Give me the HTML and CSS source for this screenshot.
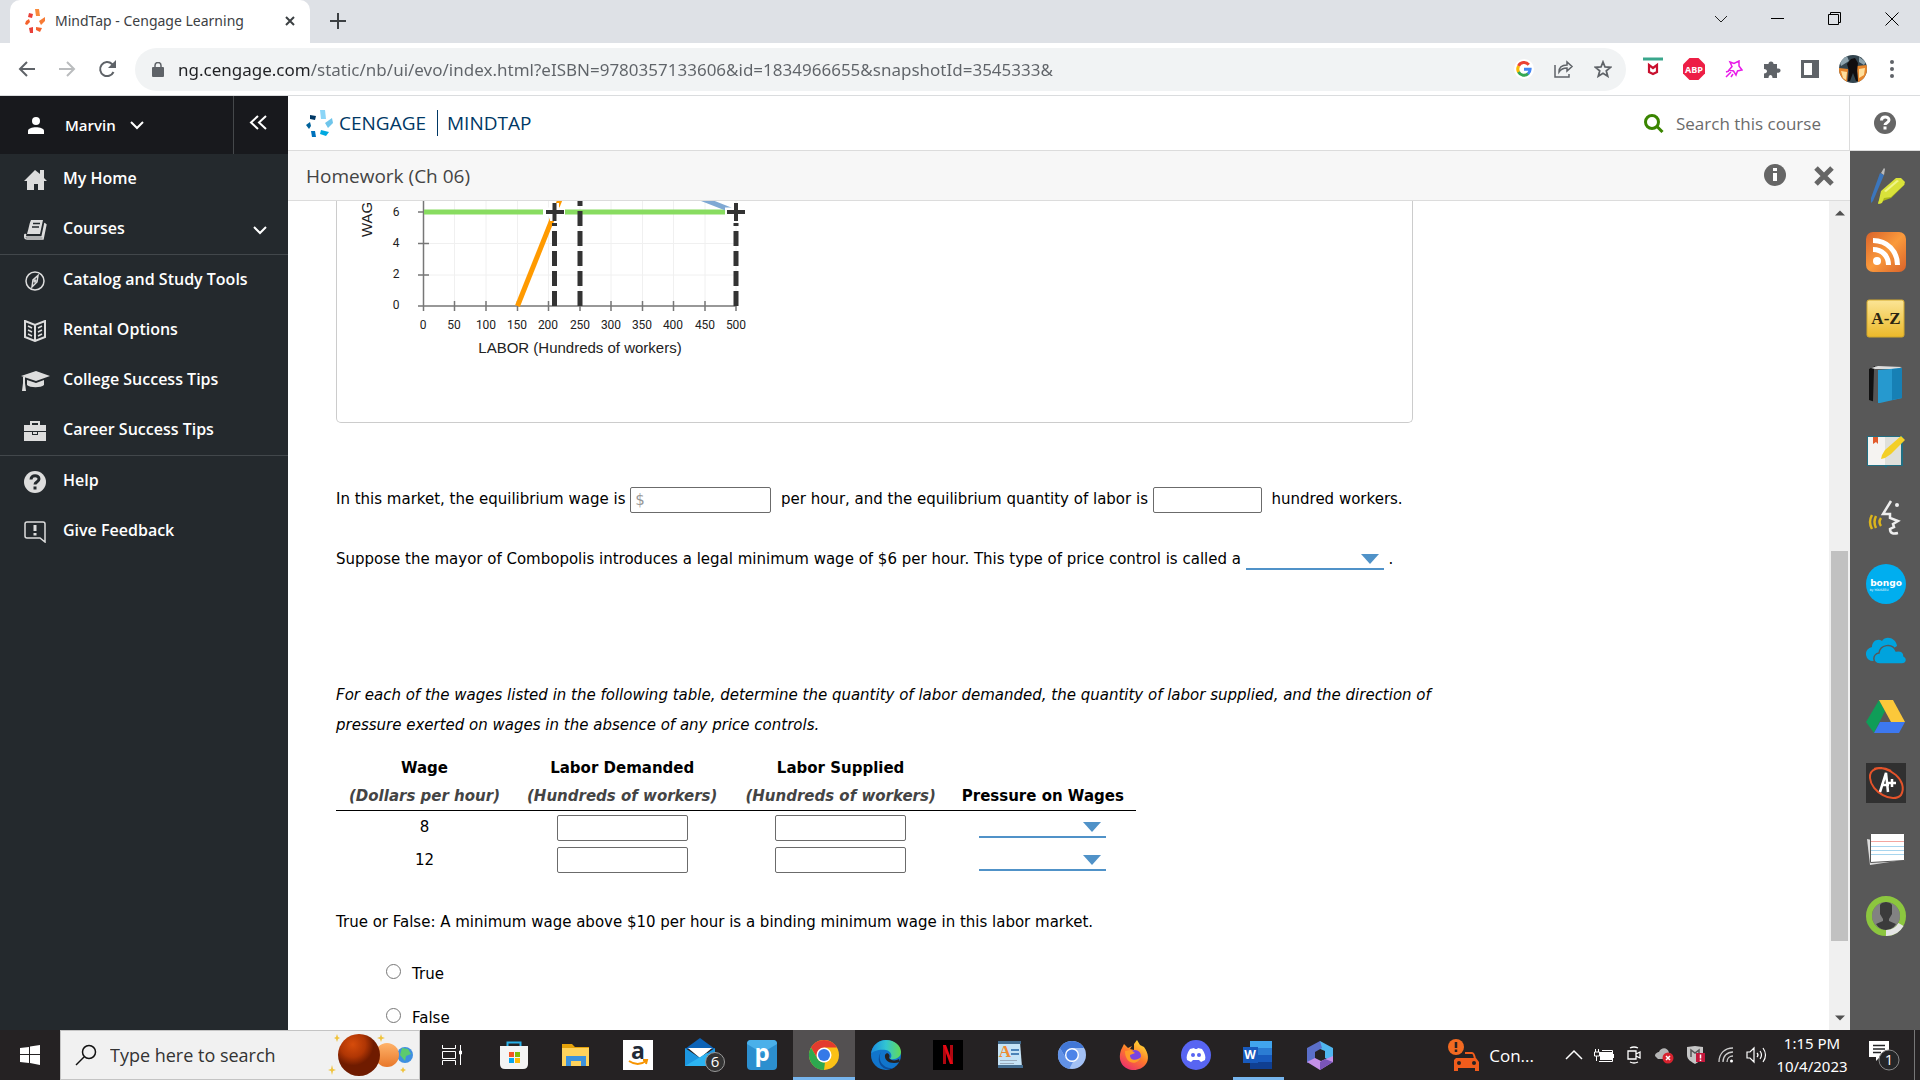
FILE: index.html
```html
<!DOCTYPE html>
<html lang="en">
<head>
<meta charset="utf-8">
<title>MindTap - Cengage Learning</title>
<link rel="stylesheet" href="styles.css">
</head>
<body>
<div class="tabstrip">
  <div class="tab">
    <svg width="20" height="24" viewBox="0 0 20 24"><g fill="#f4622c"><path fill="#f98b3c" d="M10 0h4l1 7h-4z"/><path fill="#e9403a" d="M4 4l4 1-1 4-4-1z"/><path d="M1 12l3-2 1 3-3 3-2-1z"/><path fill="#e9403a" d="M4 19l4-1v6H5z"/><path d="M11 18l6 1-2 4-4-2z"/><path fill="#f77b35" d="M14 12l6-4v4l-4 4z"/></g></svg>
    <span class="tab-title">MindTap - Cengage Learning</span>
    <button class="plain" aria-label="Close tab"><svg width="10" height="10" viewBox="0 0 10 10" fill="none" stroke="#3c4043" stroke-width="2"><path d="M1 1l8 8M9 1L1 9"/></svg></button>
  </div>
  <button class="plain newtab" aria-label="New tab"><svg width="16" height="16" viewBox="0 0 16 16" stroke="#3c4043" stroke-width="2"><path d="M8 0v16M0 8h16"/></svg></button>
  <div class="window-controls">
    <button class="plain" aria-label="Search tabs"><svg width="14" height="14" viewBox="0 0 14 14" fill="none" stroke="#222"><path d="M1 4l6 6 6-6"/></svg></button>
    <button class="plain" aria-label="Minimize"><svg width="13" height="13" viewBox="0 0 13 13" stroke="#000"><path d="M0 6.500h13"/></svg></button>
    <button class="plain" aria-label="Restore"><svg width="13" height="13" viewBox="0 0 13 13" fill="none" stroke="#000"><path d="M.5 2.500h10v10H.5zM2.500 2.500v-2h10v10h-2"/></svg></button>
    <button class="plain" aria-label="Close"><svg width="14" height="14" viewBox="0 0 14 14" stroke="#000"><path d="M.5.5l13 13M13.500.5l-13 13"/></svg></button>
  </div>
</div>

<div class="toolbar">
  <div class="history">
    <button class="plain" aria-label="Back"><svg width="18" height="16" viewBox="0 0 18 16" fill="none" stroke="#5f6368" stroke-width="2"><path d="M17 8H2M9 1L2 8l7 7"/></svg></button>
    <button class="plain" aria-label="Forward"><svg width="18" height="16" viewBox="0 0 18 16" fill="none" stroke="#babcbe" stroke-width="2"><path d="M1 8h15M9 1l7 7-7 7"/></svg></button>
    <button class="plain" aria-label="Reload"><svg width="18" height="18" viewBox="0 0 18 18" fill="none" stroke="#5f6368" stroke-width="2"><path d="M15.500 12A7 7 0 1 1 14 4l2 2"/><path fill="#5f6368" stroke="none" d="M18 0v8h-8z"/></svg></button>
  </div>
  <div class="omnibox">
    <svg width="12" height="15" viewBox="0 0 12 15"><path fill="#5f6368" d="M1 5h10a1 1 0 0 1 1 1v8a1 1 0 0 1-1 1H1a1 1 0 0 1-1-1V6a1 1 0 0 1 1-1z"/><path fill="none" stroke="#5f6368" stroke-width="1.500" d="M3 6V3.500a3 3 0 0 1 6 0V6"/></svg>
    <input class="url" type="text" aria-label="Address" value="ng.cengage.com/static/nb/ui/evo/index.html?eISBN=9780357133606&amp;id=1834966655&amp;snapshotId=3545333&amp;">
    <button class="plain" aria-label="Google"><svg width="20" height="20" viewBox="0 0 20 20" fill="none" stroke-width="3"><circle cx="10" cy="10" r="10" fill="#fff"/><path stroke="#ea4335" d="M14.800 5.700A6.200 6.200 0 0 0 4.500 7"/><path stroke="#fbbc05" d="M4.600 7a6.200 6.200 0 0 0 0 6.200"/><path stroke="#34a853" d="M4.500 13a6.200 6.200 0 0 0 9.700 1.600"/><path stroke="#4285f4" d="M14 14.800a6.200 6.200 0 0 0 2.100-4.500H10"/></svg></button>
    <button class="plain" aria-label="Share"><svg width="20" height="18" viewBox="0 0 20 18" fill="none" stroke="#5f6368" stroke-width="1.500"><path d="M1 5v12h14v-3M5 12c0-5 3-7 8-7V2l5 4.500-5 4.500V8c-4 0-6 1-8 4z"/></svg></button>
    <button class="plain" aria-label="Bookmark"><svg width="18" height="18" viewBox="0 0 18 18" fill="none" stroke="#5f6368" stroke-width="1.800"><path d="M9 2l2 5 5.500.4-4.200 3.500 1.400 5.300L9 13.300l-4.700 2.900 1.400-5.300L1.500 7.400 7 7z"/></svg></button>
  </div>
  <div class="extensions">
    <button class="plain" aria-label="McAfee"><svg width="20" height="28" viewBox="0 0 20 28"><path stroke="#3aa78c" stroke-width="3" d="M0 4h20"/><path fill="none" stroke="#c8102e" stroke-width="2.200" d="M6 17V10l4 3 4-3v7l-4 2z"/></svg></button>
    <button class="plain" aria-label="Adblock Plus"><svg width="22" height="22" viewBox="0 0 22 22"><path fill="#ed1e45" d="M6.500 0h9L22 6.500v9L15.500 22h-9L0 15.500v-9z"/><text x="11" y="15" text-anchor="middle" class="abp">ABP</text></svg></button>
    <button class="plain" aria-label="Wand"><svg width="18" height="18" viewBox="0 0 18 18" fill="none" stroke="#e81be8" stroke-width="1.500"><path d="M5 2l4 1.500L14 1v5l3 4-4.500 1L11 15l-2.500-4L4 10l3-3.500zM1 17l5-5M1 12l3-1M6 17l2-3"/></svg></button>
    <button class="plain" aria-label="Extensions"><svg width="18" height="18" viewBox="0 0 18 18" fill="#5f6368"><path d="M1 4h4.500a2.500 2.500 0 1 1 5 0H14v4.500h1.500a2 2 0 1 1 0 4.200H14V18H9.500c0-4-4-4-4 0H1v-4.500c4 0 4-4.500 0-4.500z"/></svg></button>
    <button class="plain" aria-label="Side panel"><svg width="18" height="18" viewBox="0 0 18 18"><path fill="#5f6368" fill-rule="evenodd" d="M0 0h18v18H0zM3 3v12h8V3z"/></svg></button>
    <button class="plain" aria-label="Profile"><svg width="28" height="28" viewBox="0 0 28 28"><defs><clipPath id="av"><circle cx="14" cy="14" r="14"/></clipPath></defs><g clip-path="url(#av)"><path fill="#33454f" d="M0 0h28v28H0z"/><path fill="#8ea3ad" d="M0 4l8-3 2 5-8 5zM20 2l7 5-2 3-5-3z"/><path fill="#e8862b" d="M0 13l9 1-1 14-8-6zM18 11l10-1v12l-9 6z"/><path fill="#ffdf9c" d="M2 16l6 1-1 8-3-2zM20 14l6-1-1 7-5 3z"/><path fill="#100d0f" d="M12 4l4-1 3 5-1 8 1 10h-2l-3-8-3 8H9l1-10-2-7z"/></g></svg></button>
    <button class="plain menu" aria-label="Menu"><svg width="4" height="18" viewBox="0 0 4 18" fill="#5f6368"><circle cx="2" cy="2" r="2"/><circle cx="2" cy="9" r="2"/><circle cx="2" cy="16" r="2"/></svg></button>
  </div>
</div>

<div class="app">
  <aside class="sidebar">
    <div class="user">
      <button class="user-menu">
        <svg width="16" height="17" viewBox="0 0 16 17" fill="#fff"><circle cx="8" cy="4" r="4"/><path d="M0 17v-3c0-5 16-5 16 0v3z"/></svg>
        <span>Marvin</span>
        <svg width="14" height="9" viewBox="0 0 14 9" fill="none" stroke="#fff" stroke-width="2"><path d="M1 1l6 6 6-6"/></svg>
      </button>
      <button class="collapse" aria-label="Collapse"><svg width="18" height="15" viewBox="0 0 18 15" fill="none" stroke="#fff" stroke-width="2"><path d="M9 1L2 7.500 9 14M17 1l-7 6.500 7 6.500"/></svg></button>
    </div>
    <nav class="nav">
      <a href="#"><svg width="30" height="22" viewBox="0 0 30 22"><path fill="#ddd" d="M15 1l5 4V1h4v8l3 3h-3v9h-6v-6h-4v6H7v-9H4z"/></svg><span>My Home</span></a>
      <a href="#"><svg width="30" height="22" viewBox="0 0 30 22"><path fill="#ddd" d="M11 1h12l-3 14H7c2-6 2-10 4-14z"/><path stroke="#24292d" stroke-width="1.500" d="M13 4.500h7M12 8h7"/><path fill="none" stroke="#ddd" stroke-width="1.500" d="M25 4l-3 14H7c-2 0-2-2-1-3M5 15c-1 4 0 5 2 5h16l3-15"/></svg><span class="grow">Courses</span><svg width="14" height="9" viewBox="0 0 14 9" fill="none" stroke="#fff" stroke-width="2"><path d="M1 1l6 6 6-6"/></svg></a>
      <hr>
      <a href="#"><svg width="30" height="22" viewBox="0 0 30 22" fill="none" stroke="#ddd" stroke-width="1.500"><circle cx="15" cy="11" r="9"/><path d="M18 5.500l-1 6.500-5 5 1-7z"/><circle cx="15" cy="11" r="1"/></svg><span>Catalog and Study Tools</span></a>
      <a href="#"><svg width="30" height="22" viewBox="0 0 30 22" fill="none" stroke="#ddd" stroke-width="2"><path d="M5 1l10 4 10-4v16l-10 4-10-4zM15 5v16"/><path stroke-width="1.500" d="M8 6l4 2M8 10l4 2M8 14l4 2M22 6l-4 2M22 10l-4 2M22 14l-4 2"/></svg><span>Rental Options</span></a>
      <a href="#"><svg width="30" height="22" viewBox="0 0 30 22" fill="#ddd"><path d="M1 6l15-5 14 5-14 5zM7 10l9 3 8-3v5c-3 3-14 3-17 0zM3 7h2v6l1 8H2l1-8z"/></svg><span>College Success Tips</span></a>
      <a href="#"><svg width="30" height="22" viewBox="0 0 30 22" fill="#ddd"><path fill-rule="evenodd" d="M10 5V1h10v4h6v6H4V5zM12 3v2h6V3z"/><path d="M4 12h8v3h6v-3h8v9H4z"/><path d="M13 12h4v2h-4z"/></svg><span>Career Success Tips</span></a>
      <hr>
      <a href="#"><svg width="30" height="22" viewBox="0 0 30 22"><circle cx="15" cy="11" r="11" fill="#ddd"/><path fill="none" stroke="#24292d" stroke-width="3" d="M11 8.500c0-5 8-5 8-.5 0 3-4 3-4 5.500M15 15.500v3"/></svg><span>Help</span></a>
      <a href="#"><svg width="30" height="22" viewBox="0 0 30 22" fill="none" stroke="#ddd" stroke-width="1.500"><path d="M7 1h16q2 0 2 2v18l-5-4H7q-2 0-2-2V3q0-2 2-2z"/><path stroke-width="3" d="M15 4v6M15 12v2.500"/></svg><span>Give Feedback</span></a>
    </nav>
  </aside>

  <div class="course">
    <header class="brandbar">
      <a class="brand" href="#">
        <svg width="27" height="27" viewBox="0 0 27 27"><path fill="#8bd5f7" d="M14 0h5l1 9h-5z"/><path fill="#003865" d="M4 5l6 1-1 4-5-1z"/><path fill="#00629b" d="M0 15l4-3 1 4-2 3z"/><path fill="#0072bc" d="M5 21h4l1 6H6z"/><path fill="#00a9e0" d="M15 20l8 2-3 4-6-2z"/><path fill="#6fc5eb" d="M19 13l7-5 1 5-5 5z"/></svg>
        <span>CENGAGE</span><span class="brand-split">MINDTAP</span>
      </a>
      <label class="search"><svg width="20" height="19" viewBox="0 0 20 19" fill="none" stroke="#3a8500" stroke-width="3"><circle cx="8" cy="8" r="6.500"/><path d="M13 12.500l5.500 5.500"/></svg><input type="text" placeholder="Search this course" aria-label="Search this course"></label>
      <button class="help" aria-label="Help"><svg width="22" height="22" viewBox="0 0 22 22"><circle cx="11" cy="11" r="11" fill="#666"/><path fill="none" stroke="#fff" stroke-width="3" d="M7.500 8.500c0-4.500 7.500-4.500 7.500-.5 0 3-4 3-4 5M11 14.500v3"/></svg></button>
    </header>
    <div class="body">
      <div class="activity">
        <div class="titlebar">
          <h1>Homework (Ch 06)</h1>
          <button class="plain info" aria-label="Info"><svg width="22" height="22" viewBox="0 0 22 22"><circle cx="11" cy="11" r="11" fill="#666"/><path fill="#fff" d="M9 4h4v3H9zM9 9h4v8H9z"/></svg></button>
          <button class="plain" aria-label="Close activity"><svg width="20" height="20" viewBox="0 0 20 20" stroke="#666" stroke-width="5"><path d="M2 2l16 16M18 2L2 18"/></svg></button>
        </div>
        <div class="scroller">
          <main class="question">
            <div class="graph">
              <svg class="chart" width="460" height="170" viewBox="337 201 460 170">
                <g stroke="#f0f0f0" fill="none"><path d="M423 243.500h313M423 275h313M454.500 201v105M486 201v105M517.500 201v105M548.500 201v105M580 201v105M611 201v105M642.500 201v105M673.500 201v105M705 201v105M736 201v105"/></g>
                <g stroke="#777" stroke-width="1.500" fill="none"><path d="M423.500 201v110M418 306h318M418 212h11M418 243.500h11M418 275h11M454.500 301v10M486 301v10M517.500 301v10M548.500 301v10M580 301v10M611 301v10M642.500 301v10M673.500 301v10M705 301v10M736 301v10"/></g>
                <path stroke="#88dc60" stroke-width="5" d="M424 212h312"/>
                <path stroke="#ff9a00" stroke-width="5" d="M517.500 306L563 192"/>
                <path stroke="#7fa8d3" stroke-width="5" d="M690 194l46 18"/>
                <g stroke="#fff" stroke-width="9"><path d="M543 212h22M554.500 203v18"/><path d="M725 212h24M736 203v18"/></g>
                <g stroke="#333" stroke-width="5"><path stroke-dasharray="15 5" d="M554.500 306v-83M580 306V201M736 306v-83"/><path stroke-width="4" d="M546 212h18M554.500 203v18M727 212h18M736 203v18"/></g>
                <g class="tick" text-anchor="middle"><text x="396" y="216">6</text><text x="396" y="247">4</text><text x="396" y="278">2</text><text x="396" y="309">0</text><text x="423" y="329">0</text><text x="454" y="329">50</text><text x="486" y="329">100</text><text x="517" y="329">150</text><text x="548" y="329">200</text><text x="580" y="329">250</text><text x="611" y="329">300</text><text x="642" y="329">350</text><text x="673" y="329">400</text><text x="705" y="329">450</text><text x="736" y="329">500</text></g>
                <text class="axis" text-anchor="middle" x="580" y="353">LABOR (Hundreds of workers)</text>
                <text class="axis" transform="translate(372 237) rotate(-90)">WAGE</text>
              </svg>
            </div>
            <p class="blank-line">In this market, the equilibrium wage is <input class="wide" type="text" placeholder="$" aria-label="Equilibrium wage"> per hour, and the equilibrium quantity of labor is <input type="text" aria-label="Equilibrium quantity"> hundred workers.</p>
            <p class="blank-line">Suppose the mayor of Combopolis introduces a legal minimum wage of $6 per hour. This type of price control is called a <select class="pick" aria-label="Price control type"><option></option></select> .</p>
            <p class="prompt">For each of the wages listed in the following table, determine the quantity of labor demanded, the quantity of labor supplied, and the direction of pressure exerted on wages in the absence of any price controls.</p>
            <table>
              <thead><tr><th>Wage<br><em>(Dollars per hour)</em></th><th>Labor Demanded<br><em>(Hundreds of workers)</em></th><th>Labor Supplied<br><em>(Hundreds of workers)</em></th><th>Pressure on Wages</th></tr></thead>
              <tbody>
                <tr><td>8</td><td><input type="text" aria-label="Labor demanded at 8"></td><td><input type="text" aria-label="Labor supplied at 8"></td><td><select class="pick" aria-label="Pressure at 8"><option></option></select></td></tr>
                <tr><td>12</td><td><input type="text" aria-label="Labor demanded at 12"></td><td><input type="text" aria-label="Labor supplied at 12"></td><td><select class="pick" aria-label="Pressure at 12"><option></option></select></td></tr>
              </tbody>
            </table>
            <p class="statement">True or False: A minimum wage above $10 per hour is a binding minimum wage in this labor market.</p>
            <div class="choices">
              <label><input type="radio" name="tf"> <span>True</span></label>
              <label><input type="radio" name="tf"> <span>False</span></label>
            </div>
          </main>
          <div class="scrollbar">
            <svg width="10" height="6" viewBox="0 0 10 6"><path fill="#505050" d="M0 5.500L5 .5l5 5z"/></svg>
            <div class="track"><div class="thumb"></div></div>
            <svg width="10" height="6" viewBox="0 0 10 6"><path fill="#505050" d="M0 .5l5 5 5-5z"/></svg>
          </div>
        </div>
      </div>
      <div class="rail">
        <button class="plain" aria-label="Highlighter"><svg width="40" height="40" viewBox="0 0 40 40"><path fill="#3b76bd" d="M14 7l4 2L7 35l-2 2v-5z"/><path fill="#bbb" d="M18 2l1 1-1 6-3-2z"/><path fill="#aab61c" d="M14 38l-2-1 2-5 19-16 6 2-14 14-8 3z"/><path fill="#d9e23a" d="M13 34l2-9L30 12l5 0 4 4-1 3-13 12-7 1-2 5-4 1z"/><path fill="#f0f58a" d="M18 25l13-11 2 1-13 11z"/></svg></button>
        <button class="plain" aria-label="RSS"><svg width="40" height="40" viewBox="0 0 40 40"><defs><linearGradient id="rs" x2="1" y2="1"><stop stop-color="#d9622a"/><stop offset=".5" stop-color="#fa9a3c"/><stop offset="1" stop-color="#d9622a"/></linearGradient></defs><rect width="40" height="40" rx="7" fill="url(#rs)"/><circle cx="11" cy="29" r="4" fill="#fff"/><path fill="none" stroke="#fff" stroke-width="5" d="M7 17.500c9 0 15.500 6.500 15.500 15.500M7 8.500C21 8.500 31.500 19 31.500 33"/></svg></button>
        <button class="plain" aria-label="Glossary"><svg width="40" height="40" viewBox="0 0 40 40"><defs><linearGradient id="az" x2="0" y2="1"><stop stop-color="#fbe596"/><stop offset="1" stop-color="#ecb92a"/></linearGradient></defs><rect x="1" y="1" width="37" height="37" rx="2" fill="url(#az)" stroke="#d3a92d"/><text x="20" y="25" text-anchor="middle" class="az">A-Z</text></svg></button>
        <button class="plain" aria-label="Book"><svg width="40" height="40" viewBox="0 0 40 40"><path fill="#111" d="M3 4l6-3v36l-6-2z"/><path fill="#555" d="M8 4h4v34l-5-1z"/><path fill="#ddd" d="M5 3l7-2 24 1-5 2H9z"/><path fill="#2699cf" d="M12 5l24-2v30l-22 5h-2z"/><path fill="#1780b5" d="M26 4l10-1v30l-10 2z"/></svg></button>
        <button class="plain" aria-label="Notes"><svg width="40" height="40" viewBox="0 0 40 40"><path fill="#216f83" d="M1 5h36v30H21l-1 2-2-2H1z"/><path fill="#f5f3f1" d="M2 6h17v28H2z"/><path fill="#dfe0db" d="M19 6h16v28H19z"/><path fill="#e25b2c" d="M7 6h5v7l-2-2-3 2z"/><path fill="#f3cf27" d="M19 19L35 5l4 4-14 14-6 4-4 1 1-4z"/></svg></button>
        <button class="plain" aria-label="ReadSpeaker"><svg width="40" height="40" viewBox="0 0 40 40" fill="none" stroke-width="2.500"><path stroke="#eee" d="M25 3l-8 13h7v4l8 3-5 3 1 3-4 2c0 5 4 5 8 4"/><circle cx="31" cy="7" r="2" fill="#eee" stroke="none"/><g stroke="#dcb51c" stroke-width="2.500"><path d="M15 20q-3 4 0 8M10 18q-3 6 0 12M6 17q-4 7 0 14"/></g></svg></button>
        <button class="plain" aria-label="Bongo"><svg width="40" height="40" viewBox="0 0 40 40"><circle cx="20" cy="20" r="20" fill="#00aeef"/><text x="20" y="22" text-anchor="middle" class="bongo">bongo</text><text x="13" y="27" text-anchor="middle" class="bongo-sub">by YOUSEEU</text></svg></button>
        <button class="plain" aria-label="OneDrive"><svg width="40" height="40" viewBox="0 0 40 40"><path fill="#00a3dd" d="M8 30a7 7 0 0 1-2-14c0-6 6-9 10-6 4-6 14-3 15 5z"/><path fill="#00a3dd" stroke="#585858" stroke-width="1.500" d="M14 33c-8 0-8-10-1-11 1-8 13-11 17-2 6-1 8 2 8 5 4 2 3 8-2 8z"/></svg></button>
        <button class="plain" aria-label="Drive"><svg width="40" height="40" viewBox="0 0 40 40"><path fill="#0f9d58" d="M13 3l6 11L8 36 0 25z"/><path fill="#fbc83a" d="M13 3h14l12 22H25z"/><path fill="#3d78ef" d="M14 25h25l-6 11H8z"/></svg></button>
        <button class="plain" aria-label="Grades"><svg width="40" height="40" viewBox="0 0 40 40" fill="none"><path fill="#303030" d="M0 0h40v40H0z"/><path stroke="#e5532a" stroke-width="2" d="M8 6c14-5 35 12 27 26-8 9-30-3-31-17C3 6 14 2 25 8"/><path stroke="#fff" stroke-width="2.500" d="M14 29l6-19 2 19M15 22h8M26 16v8M22 20h8"/></svg></button>
        <button class="plain" aria-label="Flashcards"><svg width="40" height="40" viewBox="0 0 40 40"><path fill="#ddd" d="M1 9l5 1 31 20-33 5z"/><path fill="#fff" stroke="#555" d="M4.500 3.500h34v27l-34 2z"/><path stroke="#f3a6a0" d="M5 11.500h33"/><path stroke="#a7d5ee" d="M5 16.500h33M5 20.500h33M5 24.500h33"/></svg></button>
        <button class="plain" aria-label="Profile status"><svg width="40" height="40" viewBox="0 0 40 40"><circle cx="20" cy="20" r="14" fill="#828282"/><path fill="#3b3b3b" d="M14 9c2-4 10-4 12 0v9l-3 5v2l7 3c-5 8-15 8-20 0l7-3v-2l-3-5z"/><circle cx="20" cy="20" r="17" fill="none" stroke="#8cc63f" stroke-width="6"/><path fill="none" stroke="#e5e5e5" stroke-width="6" d="M35 28.500A17 17 0 0 1 20 37"/></svg></button>
      </div>
    </div>
  </div>
</div>

<div class="taskbar">
  <button class="start" aria-label="Start"><svg width="20" height="20" viewBox="0 0 20 20" fill="#fff"><path d="M0 3l9-1v7H0zM10 1.500L20 0v9H10zM0 10h9v8l-9-1zM10 10h10v10l-10-2z"/></svg></button>
  <div class="tasksearch">
    <svg width="22" height="22" viewBox="0 0 22 22" fill="none" stroke="#111" stroke-width="1.500"><circle cx="14" cy="8" r="6.500"/><path d="M9 13l-8 8"/></svg>
    <input type="text" placeholder="Type here to search" aria-label="Type here to search">
    <svg width="86" height="48" viewBox="0 0 86 48"><defs><radialGradient id="p1" cx=".35" cy=".25"><stop stop-color="#d64c0b"/><stop offset=".6" stop-color="#b03604"/><stop offset="1" stop-color="#6f1b00"/></radialGradient><linearGradient id="p2" x2="0" y2="1"><stop stop-color="#ffb36a"/><stop offset="1" stop-color="#e8772a"/></linearGradient></defs><g fill="#f0c33c"><path d="M9 3l1 3 2 1-2 1-1 3-1-3-2-1 2-1zM53 3l1 3 3 1-3 1-1 3-1-3-3-1 3-1zM4 34l1 4 3 1-3 1-1 4-1-4-3-1 3-1zM75 36l1 2 2 1-2 1-1 2-1-2-2-1 2-1z"/></g><circle cx="77" cy="24" r="8" fill="#3f8fe0"/><path fill="#5ccb6f" d="M74 17l6 1 3 5-5 2-1 5-5-6z"/><circle cx="59" cy="24" r="12" fill="url(#p2)"/><circle cx="31" cy="24" r="21" fill="url(#p1)"/></svg>
  </div>
  <div class="apps">
    <button aria-label="Task view"><svg width="22" height="20" viewBox="0 0 22 20" fill="none" stroke="#fff"><path d="M1.500 0v3.500h13V0M1.500 20v-4.500h13V20M1.500 6.500h13v7h-13zM19.500 0v20"/><path fill="#fff" d="M18.500 6h2v3h-2z"/></svg></button>
    <button aria-label="Store"><svg width="30" height="30" viewBox="0 0 30 30"><path fill="none" stroke="#29b0e8" stroke-width="2" d="M8.500 8V2.500h13V8"/><path fill="#f4f4f4" d="M1 6h28v18q0 5-5 5H6q-5 0-5-5z"/><path fill="#f35325" d="M10 12h5v5h-5z"/><path fill="#81bc06" d="M16 12h5v5h-5z"/><path fill="#05a6f0" d="M10 18h5v5h-5z"/><path fill="#ffba08" d="M16 18h5v5h-5z"/></svg></button>
    <button aria-label="File Explorer"><svg width="30" height="30" viewBox="0 0 30 30"><path fill="#e5a20a" d="M1 4h10l3 3h14v6H1z"/><path fill="#ffd35c" d="M1 8h27v18H1z"/><path fill="#3d92dc" d="M5 26V16h20v10h-5v-5H10v5z"/></svg></button>
    <button aria-label="Amazon"><svg width="30" height="30" viewBox="0 0 30 30"><path fill="#fff" d="M0 0h30v30H0z"/><text x="15" y="19" text-anchor="middle" class="amazon">a</text><path fill="none" stroke="#f79400" stroke-width="2" d="M6 21q9 6 17 0M20 20l4 0-1 4"/></svg></button>
    <button aria-label="Mail"><svg width="42" height="34" viewBox="0 0 42 34"><path fill="#0b63b8" d="M6 11L21 0l15 11z"/><path fill="#fff" d="M9 10h24L21 20z"/><path fill="#1c96e0" d="M6 10l15 10 15-10v18H6z"/><path fill="#2cb4f2" d="M6 28L28 15l8 5v8z"/><circle cx="36" cy="24" r="9.500" fill="#333" stroke="#999"/><text x="36" y="29" text-anchor="middle" class="badge">6</text></svg></button>
    <button aria-label="P app"><svg width="30" height="30" viewBox="0 0 30 30"><rect width="30" height="30" rx="4" fill="#2c8fcf"/><path fill="#4ab0ea" d="M0 4q0-4 4-4h22q4 0 4 4L15 13z"/><text x="15" y="21" text-anchor="middle" class="papp">p</text></svg></button>
    <button class="active" aria-label="Chrome"><svg width="30" height="30" viewBox="0 0 30 30"><circle cx="15" cy="15" r="15" fill="#fbc116"/><path fill="#e33b2e" d="M2 7.500a15 15 0 0 1 26 0H15l-6.500 11z"/><path fill="#2da94f" d="M2 7.500l6.500 11.300q2.500 4 7.500 3.700L15 30A15 15 0 0 1 2 7.500z"/><circle cx="15" cy="15" r="7.500" fill="#fff"/><circle cx="15" cy="15" r="6" fill="#3579e8"/></svg></button>
    <button aria-label="Edge"><svg width="30" height="30" viewBox="0 0 30 30"><defs><linearGradient id="ed"><stop stop-color="#1a8ce0"/><stop offset=".5" stop-color="#32c5d2"/><stop offset="1" stop-color="#63db55"/></linearGradient></defs><circle cx="15" cy="15" r="15" fill="#1175cc"/><path fill="url(#ed)" d="M0 14C1 5 8 0 15 0c9 0 15 6 15 12 0 5-5 8-11 7 3-3 1-8-4-9C8 9 2 11 0 14z"/><path fill="#0c4e9c" d="M10 12c-4 8 2 17 12 16-8 5-19-5-12-16z"/><path fill="#252223" d="M14 15c2-4 6 0 4 3 2 3 7 3 10 1l1 3c-9 3-16-1-15-7z"/></svg></button>
    <button aria-label="Netflix"><svg width="30" height="30" viewBox="0 0 30 30"><path d="M0 0h30v30H0z"/><path fill="#b00710" d="M10 5h3v19h-3zM17 5h3v19h-3z"/><path fill="#e50914" d="M10 5h3l7 19h-3z"/></svg></button>
    <button aria-label="WordPad"><svg width="30" height="30" viewBox="0 0 30 30"><path fill="#c5e3f6" d="M3 2h22l2 25H3z"/><path fill="#426b8e" d="M3 1h23v3H3zM3 25h25v3H3z"/><text x="10" y="17" text-anchor="middle" class="pad">A</text><path stroke="#4c83b8" stroke-width="2" d="M16 10h8M16 14h8"/><path stroke="#9ab" d="M5 20.500h17M5 23.500h14"/></svg></button>
    <button aria-label="Chromium"><svg width="28" height="28" viewBox="0 0 30 30"><circle cx="15" cy="15" r="15" fill="#a3c1f5"/><path fill="#4277d6" d="M2 7.500a15 15 0 0 1 26 0H15l-6.500 11z"/><path fill="#6292e6" d="M2 7.500l6.500 11.300q2.500 4 7.500 3.700L12 30A15 15 0 0 1 2 7.500z"/><circle cx="15" cy="15" r="7.500" fill="#fff"/><circle cx="15" cy="15" r="6" fill="#4d84e8"/></svg></button>
    <button aria-label="Firefox"><svg width="30" height="30" viewBox="0 0 30 30"><defs><linearGradient id="ff" x1=".8" x2=".2" y2="1"><stop stop-color="#ffe735"/><stop offset=".5" stop-color="#ff7a2a"/><stop offset="1" stop-color="#e92a72"/></linearGradient></defs><path fill="url(#ff)" d="M2 10l3-6 4 4 4-2-2 3 4 1V4l3-4 3 5 4 2c10 14-1 23-10 23C5 30-2 22 2 10z"/><circle cx="16" cy="16" r="6" fill="#7a45e0"/><path fill="#ff9b28" d="M6 11l6-1 4 3-5 2c0 6 7 6 11 2-2 8-16 9-16-6z"/></svg></button>
    <button aria-label="Discord"><svg width="30" height="30" viewBox="0 0 30 30"><circle cx="15" cy="15" r="15" fill="#5865f2"/><path fill="#fff" d="M9 9l4-1 1 1h2l1-1 4 1c3 4 4 8 3 11l-4 2-2-2h-6l-2 2-4-2c-1-3 0-7 3-11z"/><circle cx="12" cy="15" r="2" fill="#5865f2"/><circle cx="18" cy="15" r="2" fill="#5865f2"/></svg></button>
    <button class="open" aria-label="Word"><svg width="30" height="28" viewBox="0 0 30 28"><path fill="#41a5ee" d="M7 0h22v7H7z"/><path fill="#2b7cd3" d="M7 7h22v7H7z"/><path fill="#185abd" d="M7 14h22v7H7z"/><path fill="#103f91" d="M7 21h22v7H7z"/><path fill="#185abd" d="M0 6h15v16H0z"/><text x="7" y="18" text-anchor="middle" class="word">W</text></svg></button>
    <button aria-label="Microsoft 365"><svg width="28" height="30" viewBox="0 0 28 30"><path fill="#50b6ef" d="M14 1l13 7v14l-8-4v-7l-7-3z"/><path fill="#5b6fc9" d="M14 1L1 8v15l8-4v-7l7-4z"/><path fill="#c590e8" d="M1 22l8-4 6 3 12-5v6l-13 8z"/><path fill="#7a55b8" d="M14 30l13-8-8-3-5 3z"/></svg></button>
  </div>
  <div class="tray">
    <button class="news"><svg width="32" height="32" viewBox="0 0 32 32"><circle cx="8" cy="8" r="8" fill="#f26a21"/><path stroke="#252223" stroke-width="2.500" d="M8 3v6M8 10.500v2.500"/><path fill="none" stroke="#f05c1c" stroke-width="2" d="M17 14h7q2 0 3 6"/><path fill="#f05c1c" d="M6 21l2-2h20l3 4v9h-4v-3H10v3H6z"/><circle cx="11" cy="24" r="2" fill="#252223"/><circle cx="26" cy="24" r="2" fill="#252223"/></svg><span>Con...</span></button>
    <div class="status">
      <button class="plain" aria-label="Show hidden icons"><svg width="16" height="10" viewBox="0 0 16 10" fill="none" stroke="#fff" stroke-width="1.500"><path d="M0 9l8-8 8 8"/></svg></button>
      <button class="plain" aria-label="Battery"><svg width="20" height="14" viewBox="0 0 20 14"><path fill="#fff" d="M6 4h12v8H6zM18 6h2v4h-2z"/><path fill="none" stroke="#fff" d="M5 13.500h13.500v-11H8M2.500 8v5M.5 4h5v4h-5zM1.500 4V1M4.500 4V1"/></svg></button>
      <button class="plain" aria-label="Meet Now"><svg width="16" height="18" viewBox="0 0 16 18" fill="none" stroke="#fff" stroke-width="1.300"><path d="M2 5h8v8H2zM10 8l4-2v6l-4-2M4 2q4-2 8 0M4 16q4 2 8 0"/></svg></button>
      <button class="plain" aria-label="OneDrive error"><svg width="20" height="18" viewBox="0 0 20 18"><path fill="#b5b5b5" d="M1 10c0-3 3-4 4-4 2-5 9-5 10 1 3 1 4 4 2 6H4z"/><circle cx="14" cy="12" r="5.500" fill="#d8232f"/><path stroke="#fff" stroke-width="1.500" d="M12 10l4 4M16 10l-4 4"/></svg></button>
      <button class="plain" aria-label="Security"><svg width="20" height="20" viewBox="0 0 20 20"><path fill="#c6c6c6" d="M1 2l8-1 8 1v8c0 5-5 7-8 9-3-2-8-4-8-9z"/><path fill="none" stroke="#555" stroke-width="1.500" d="M5 12V5l4 3 4-3v7"/><path fill="#c4183c" d="M10 8h9v9h-9z"/><path stroke="#fff" stroke-width="1.500" d="M14.500 9.500v4M14.500 14.500v1.500"/></svg></button>
      <button class="plain" aria-label="Wi-Fi"><svg width="16" height="16" viewBox="0 0 16 16" fill="none" stroke="#ccc" stroke-width="1.300"><path d="M1 15C1 6 7 1 15 1M5 15c0-6 4-10 10-10M9 15c0-4 3-6 6-6"/><circle cx="13.500" cy="14" r="1.500" fill="#fff" stroke="none"/></svg></button>
      <button class="plain" aria-label="Volume"><svg width="21" height="16" viewBox="0 0 21 16" fill="none" stroke="#fff" stroke-width="1.200"><path d="M1 5h3l4-4v14l-4-4H1zM11 6q2 2 0 4M14 4q3 4 0 8M17 1q5 7 0 14"/></svg></button>
    </div>
    <div class="clock"><span>1:15 PM</span><span>10/4/2023</span></div>
    <button class="plain notes" aria-label="Notifications"><svg width="32" height="32" viewBox="0 0 32 32"><path fill="#fff" d="M1 2h20v16h-9l-4 4v-4H1z"/><path stroke="#252628" stroke-width="1.500" d="M5 6.500h12M5 10h12M5 13.500h8"/><circle cx="21" cy="21" r="10" fill="#252628" stroke="#888"/><text x="21" y="26" text-anchor="middle" class="badge">1</text></svg></button>
  </div>
</div>
</body>
</html>
```
FILE: styles.css
```css
* { box-sizing: border-box; }
body {
  margin: 0;
  height: 100vh;
  display: flex;
  flex-direction: column;
  overflow: hidden;
  background: #fff;
  color: #000;
  font-family: "Open Sans", "Noto Sans", sans-serif;
}
svg { display: block; flex: none; }
button { font: inherit; border: 0; padding: 0; background: none; }
input { font: inherit; }
a { color: inherit; text-decoration: none; }

/* Browser frame */
.tabstrip { flex: none; display: flex; height: 43px; background: #dee1e6; padding-left: 10px; }
.tab {
  display: flex; align-items: center; width: 300px; padding: 0 15px 2px;
  background: #fff; border-radius: 10px 10px 0 0; font-size: 14px; color: #3c4043;
}
.tab-title { flex: 1; margin-left: 10px; font-family: "Noto Sans", sans-serif; }
.newtab { margin-left: 20px; padding-bottom: 2px; }
.window-controls { margin-left: auto; display: flex; padding-bottom: 6px; }
.window-controls button { width: 57px; display: flex; align-items: center; justify-content: center; }
.toolbar { flex: none; display: flex; align-items: center; height: 53px; padding: 0 26px 0 18px; border-bottom: 1px solid #dadcde; }
.history { display: flex; align-items: center; gap: 22px; width: 117px; }
.omnibox {
  flex: 1; display: flex; align-items: center; gap: 20px; height: 43px;
  padding: 0 14px 0 17px; border-radius: 22px; background: #f1f3f4;
}
.url {
  flex: 1; border: 0; padding: 0; margin-left: -6px; font-family: "Noto Sans", sans-serif; font-size: 17px; color: transparent;
  background: linear-gradient(to right, #202124 132px, #5f6368 132px); background-clip: text; -webkit-background-clip: text;
}
.extensions { display: flex; align-items: center; gap: 20px; margin-left: 17px; }
.menu { margin-left: 3px; }
.abp { font: bold 9px "Open Sans", sans-serif; fill: #fff; }

/* Course shell */
.app { flex: 1; min-height: 0; display: flex; }
.sidebar { flex: none; width: 288px; background: #24292d; color: #fff; font-size: 16px; font-weight: 600; }
.user { display: flex; height: 58px; background: #18191d; }
.user button { color: #fff; font-weight: 600; }
.user-menu { flex: 1; display: flex; align-items: center; padding-left: 28px; }
.user-menu span { margin: 0 14px 0 21px; font-size: 15px; }
.collapse { flex: 0 0 55px; border-left: 1px solid #45484b; display: flex; align-items: center; justify-content: center; }
.user .collapse { padding: 0 6px 6px 0; }
.nav a { display: flex; align-items: center; height: 50px; padding: 0 21px 2px 20px; gap: 13px; }
.nav svg { margin-top: 4px; }
.nav hr { margin: 0; border: 0; height: 1px; background: #42474b; }
.grow { flex: 1; }

.course { flex: 1; min-width: 0; display: flex; flex-direction: column; }
.brandbar { flex: none; display: flex; height: 55px; border-bottom: 1px solid #dcdcdc; }
.brand { display: flex; align-items: center; gap: 6px; padding-left: 18px; color: #003865; font-size: 19px; }
.brand span { line-height: 26px; }
.brand-split { border-left: 1px solid #003865; padding-left: 9px; margin-left: 5px; }
.search { margin-left: auto; display: flex; align-items: center; gap: 12px; }
.search input { border: 0; padding: 0; width: 173px; font-size: 17px; background: none; }
.search input::placeholder { color: #6b6b6b; }
.help { width: 71px; border-left: 1px solid #dcdcdc; display: flex; align-items: center; justify-content: center; }
.body { flex: 1; min-height: 0; display: flex; }
.activity { flex: 1; min-width: 0; display: flex; flex-direction: column; }
.titlebar { flex: none; display: flex; align-items: center; height: 50px; padding: 0 16px 0 18px; gap: 28px; background: #f7f7f7; border-bottom: 1px solid #dcdcdc; }
.titlebar h1 { flex: 1; margin: 0; font-size: 19px; font-weight: 400; color: #444; }
.info { padding-bottom: 2px; }
.rail { flex: none; width: 70px; height: 100%; background: #585858; padding: 15px 0 94px 2px; display: flex; flex-direction: column; align-items: center; justify-content: space-between; }
.scroller { flex: 1; min-height: 0; display: flex; }
.scrollbar { flex: none; width: 21px; background: #f0f0f0; display: flex; flex-direction: column; align-items: center; padding: 9px 0; gap: 5px; }
.track { flex: 1; width: 17px; display: flex; flex-direction: column; }
.track::before { content: ""; flex: 330; }
.track::after { content: ""; flex: 69; }
.thumb { flex: 390; background: #c1c1c1; }

/* Question */
.question { flex: 1; min-width: 0; overflow: hidden; padding: 0 48px; font: 15px/30px "DejaVu Sans", sans-serif; }
.graph { max-width: 1077px; height: 222px; margin-bottom: 61px; border: 1px solid #ccc; border-top: 0; border-radius: 0 0 5px 5px; }
.tick { font: 12px Roboto, sans-serif; fill: #222; }
.axis { font: 15px "Liberation Sans", sans-serif; fill: #222; }
.question p { margin: 0; max-width: 1110px; }
.question .blank-line + .blank-line { margin-top: 30px; }
.question input[type="text"] { width: 109px; height: 26px; padding: 0 4px; border: 1px solid #6b6b6b; border-radius: 2px; vertical-align: middle; }
.question input.wide[type="text"] { width: 141px; }
.question input::placeholder { color: #999; }
.blank-line input { margin-right: 5px; }
.pick {
  width: 138px; height: 20px; border: 0; border-bottom: 2px solid #5092c8; border-radius: 0; appearance: none; vertical-align: middle;
  background: url("data:image/svg+xml,%3Csvg xmlns='http://www.w3.org/2000/svg' width='18' height='10'%3E%3Cpath fill='%235092c8' d='M0 0h18l-9 10z'/%3E%3C/svg%3E") no-repeat right 5px top 4px;
}
.question .prompt { margin-top: 106px; font-style: italic; }
table { margin-top: 14px; border-collapse: collapse; text-align: center; }
th { padding: 0 14px; line-height: 28px; vertical-align: bottom; border-bottom: 1px solid #000; }
th:first-child { padding: 0 13px; }
th:last-child { padding: 0 12px; }
th em { color: #444; }
td { height: 33px; padding: 0; line-height: 26px; vertical-align: middle; }
.question td input[type="text"] { width: 131px; }
table .pick { width: 127px; }
.question .statement { margin-top: 30px; }
.choices { display: flex; flex-direction: column; gap: 14px; margin: 22px 50px; }
.choices label { display: flex; align-items: center; }
.choices input { width: 15px; height: 15px; margin: 0 11px 5px 0; }

/* Taskbar */
.taskbar { flex: none; display: flex; height: 50px; background: #252223; color: #fff; }
.taskbar button { display: flex; align-items: center; justify-content: center; color: inherit; }
.taskbar svg { overflow: visible; }
.taskbar .start { width: 60px; }
.tasksearch { width: 360px; display: flex; align-items: center; background: #f1f1f1; border: 1px solid #c4c4c4; padding: 0 5px 0 14px; }
.tasksearch input { flex: 1; min-width: 0; border: 0; padding: 0; margin-left: 13px; background: none; font-size: 18px; }
.tasksearch input::placeholder { color: #333; }
.apps { display: flex; margin-left: 1px; }
.apps button { width: 62px; }
.apps .active { background: #535051; box-shadow: inset 0 -3px #76b5ee; }
.apps .open { background: linear-gradient(#76b5ee, #76b5ee) no-repeat center bottom / 51px 3px; }
.tray { margin-left: auto; display: flex; align-items: center; margin-right: 5px; padding-right: 14px; border-right: 1px solid #777; align-self: stretch; }
.news { gap: 9px; font-size: 17px; }
.status { display: flex; align-items: center; gap: 12px; margin: 0 9px 0 32px; }
.clock { width: 72px; display: flex; flex-direction: column; align-items: center; padding-bottom: 1px; font: 15px/23px "Noto Sans", sans-serif; }
.tray .notes { margin-left: 20px; }
.badge { font: 15px "Open Sans", sans-serif; fill: #fff; }
.az { font: bold 17px "Liberation Serif", serif; fill: #2b2410; }
.bongo { font: bold 9px "DejaVu Sans", sans-serif; fill: #fff; }
.bongo-sub { font: 3px "DejaVu Sans", sans-serif; fill: #fff; }
.amazon { font: bold 23px "Open Sans", sans-serif; fill: #222b38; }
.papp { font: bold 24px "Open Sans", sans-serif; fill: #fff; }
.pad { font: bold 17px "Liberation Serif", serif; fill: #ef8b32; }
.word { font: bold 12px "Open Sans", sans-serif; fill: #fff; }
```
